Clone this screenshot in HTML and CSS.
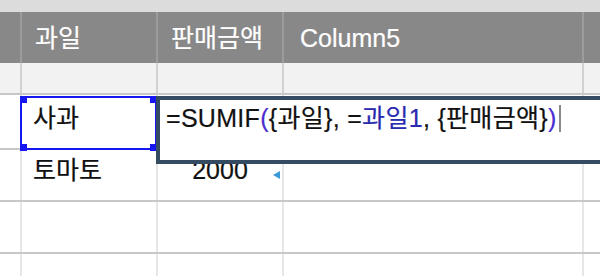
FILE: index.html
```html
<!DOCTYPE html>
<html>
<head>
    <title>Sheet</title>
    <link rel="stylesheet" href="styles.css">
</head>
<body>
    <div class="sheet">
        <div class="band"></div>

        <div class="row head">
            <div class="cell c0"></div>
            <div class="cell c1">과일</div>
            <div class="cell c2">판매금액</div>
            <div class="cell c3">Column5</div>
            <div class="cell c4"></div>
        </div>

        <div class="row blank">
            <div class="cell c0"></div>
            <div class="cell c1"></div>
            <div class="cell c2"></div>
            <div class="cell c3"></div>
            <div class="cell c4"></div>
        </div>

        <div class="row tall">
            <div class="cell c0"></div>
            <div class="cell c1">사과</div>
            <div class="cell c2"></div>
            <div class="cell c3"></div>
            <div class="cell c4"></div>
        </div>

        <div class="row">
            <div class="cell c0"></div>
            <div class="cell c1">토마토</div>
            <div class="cell c2 num">2000<span class="marker"></span></div>
            <div class="cell c3"></div>
            <div class="cell c4"></div>
        </div>

        <div class="row">
            <div class="cell c0"></div>
            <div class="cell c1"></div>
            <div class="cell c2"></div>
            <div class="cell c3"></div>
            <div class="cell c4"></div>
        </div>

        <div class="row">
            <div class="cell c0"></div>
            <div class="cell c1"></div>
            <div class="cell c2"></div>
            <div class="cell c3"></div>
            <div class="cell c4"></div>
        </div>

        <!-- selection + inline formula editor -->
        <div class="selection">
            <span class="handle tl"></span>
            <span class="handle bl"></span>
            <span class="handle tr"></span>
            <span class="handle br"></span>
        </div>
        <div class="editor">
            <span class="fx">=SUMIF<span class="paren">(</span>{과일}, =<span class="ref">과일1</span>, {판매금액}<span class="paren">)</span></span><span class="caret"></span>
        </div>
    </div>
</body>
</html>
```

FILE: styles.css
```css
body {
    margin: 0;
    font-family: "Liberation Sans", "Noto Sans CJK KR", sans-serif;
    font-size: 25px;
    color: #111;
    background: #fff;
    overflow: hidden;
}
.sheet {
    position: relative;
    width: 600px;
    height: 276px;
    overflow: hidden;
}
.band {
    height: 12px;
    background: #dcdcdc;
}
.row {
    display: flex;
    height: 52px;
    border-bottom: 2px solid #c8c8c8;
    box-sizing: border-box;
}
.cell {
    box-sizing: border-box;
    border-right: 2px solid #e6e6e6;
    padding: 6px 0 0 11px;
    line-height: 28px;
    white-space: nowrap;
    position: relative;
    -webkit-text-stroke: 0.2px currentColor;
}
.c0 { width: 22px; padding: 0; }
.c1 { width: 136px; }
.c2 { width: 126px; }
.c3 { width: 300px; }
.c4 { flex: 1; border-right: none; }

.row.head {
    height: 51px;
    background: #888888;
    color: #fff;
    border-bottom: none;
}
.row.head .cell {
    border-right-color: #9c9c9c;
    display: flex;
    align-items: center;
    padding-top: 0;
    padding-left: 13px;
}
.row.head .c0 { padding: 0; }
.row.head .c3 { padding-left: 16px; }

.row.blank {
    height: 32px;
    background: #f2f2f2;
}
.row.blank .cell {
    border-right-color: #d2d2d2;
}
.row.tall {
    height: 55px;
}
.row.tall .cell {
    padding-top: 9px;
}
.num {
    text-align: center;
    padding-left: 0;
}
.marker {
    position: absolute;
    right: 2px;
    top: 21px;
    width: 0;
    height: 0;
    border-top: 4px solid transparent;
    border-bottom: 4px solid transparent;
    border-right: 7px solid #3a9ad9;
}

.selection {
    position: absolute;
    left: 20px;
    top: 96px;
    width: 137px;
    height: 54px;
    border: 2px solid #1616f2;
    box-sizing: border-box;
}
.handle {
    position: absolute;
    width: 7px;
    height: 7px;
    background: #1616f2;
}
.handle.tl { left: -2px; top: -2px; }
.handle.bl { left: -2px; bottom: -3px; }
.handle.tr { right: -2px; top: -2px; }
.handle.br { right: -2px; bottom: -3px; }

.editor {
    position: absolute;
    left: 156px;
    top: 96px;
    width: 520px;
    height: 68px;
    border: 4px solid #354b62;
    border-right: none;
    box-sizing: border-box;
    background: #fff;
    padding: 4px 0 0 6px;
    line-height: 28px;
    letter-spacing: 0.3px;
    white-space: nowrap;
    color: #111;
    -webkit-text-stroke: 0.2px currentColor;
}
.paren {
    color: #4a2cd0;
}
.ref {
    color: #2a2ab0;
}
.caret {
    display: inline-block;
    width: 2px;
    height: 27px;
    margin-left: 2px;
    vertical-align: -5px;
    background: #8a8a8a;
    -webkit-text-stroke: 0;
}
```
